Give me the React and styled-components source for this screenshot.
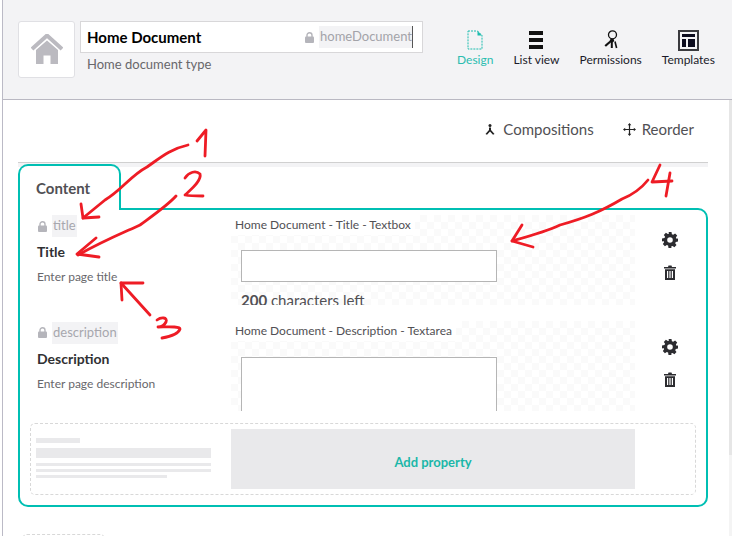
import styled, { createGlobalStyle } from "styled-components";

const TEAL = "#00bfb3";

const GlobalStyle = createGlobalStyle`
  html, body {
    margin: 0;
    width: 732px;
    height: 536px;
    overflow: hidden;
    background: #fff;
    font-family: Lato, "Open Sans", sans-serif;
  }
  * { box-sizing: border-box; }
`;

const tabs = [
  { label: "Design", active: true, icon: <DesignIcon /> },
  { label: "List view", icon: <ListIcon /> },
  { label: "Permissions", icon: <KeysIcon /> },
  { label: "Templates", icon: <TemplateIcon /> },
];

const properties = [
  {
    alias: "title",
    name: "Title",
    help: "Enter page title",
    editor: "Home Document - Title - Textbox",
    kind: "input",
    top: 17,
  },
  {
    alias: "description",
    name: "Description",
    help: "Enter page description",
    editor: "Home Document - Description - Textarea",
    kind: "textarea",
    top: 18,
    aliasHeight: 23,
  },
];

function LockIcon() {
  return (
    <svg width="9" height="11" viewBox="0 0 9 11">
      <path d="M2 5V3.2a2.5 2.5 0 0 1 5 0V5" fill="none" stroke="#b5b5bb" strokeWidth="1.4" />
      <rect x="0" y="4.6" width="9" height="6.4" rx="1" fill="#b5b5bb" />
    </svg>
  );
}

function HomeIcon() {
  return (
    <svg width="32" height="31" viewBox="0 0 32 31">
      <path d="M1 15L16 1.5 31 15" fill="none" stroke="#bbbac0" strokeWidth="4" />
      <path d="M5 16L16 6.5 27 16V30H19.5V21.5H12.5V30H5Z" fill="#bbbac0" />
    </svg>
  );
}

function DesignIcon() {
  return (
    <svg width="16" height="20" viewBox="0 0 16 20">
      <path
        d="M1 1H10.5L15 5.5V19H1Z"
        fill="none"
        stroke="#1cbcae"
        strokeWidth="1"
        strokeDasharray="2 1"
      />
      <path d="M10.5 1L15 5.5H10.5Z" fill="#1cbcae" />
    </svg>
  );
}

function ListIcon() {
  return (
    <svg width="14" height="18" viewBox="0 0 14 18">
      <rect y="0" width="14" height="4" fill="#111" />
      <rect y="7" width="14" height="4" fill="#111" />
      <rect y="14" width="14" height="4" fill="#111" />
    </svg>
  );
}

function KeysIcon() {
  return (
    <svg width="14" height="20" viewBox="0 0 14 20">
      <circle cx="8.5" cy="4.8" r="4" fill="none" stroke="#111" strokeWidth="1.3" />
      <circle cx="8" cy="10.5" r="2.1" fill="#111" />
      <path d="M7 11L1.2 16" stroke="#111" strokeWidth="2.2" />
      <path d="M7.8 12V18" stroke="#111" strokeWidth="2" />
      <path d="M11 11.5L12.6 18" stroke="#111" strokeWidth="1.6" />
    </svg>
  );
}

function TemplateIcon() {
  return (
    <svg width="21" height="21" viewBox="0 0 21 21">
      <rect x="1" y="1" width="19" height="19" fill="none" stroke="#3a3a3e" strokeWidth="2" />
      <rect x="4" y="4" width="13" height="3" fill="#0c0c1e" />
      <rect x="4" y="9" width="4" height="8" fill="#0c0c1e" />
      <rect x="10" y="9" width="7" height="8" fill="#0c0c1e" />
    </svg>
  );
}

function CompositionsIcon() {
  return (
    <svg width="10" height="11" viewBox="0 0 10 11">
      <circle cx="5" cy="1.6" r="1.5" fill="#222" />
      <path d="M4 3.5H6V6L9.5 10 8 10.8 5 7.6 2 10.8 0.5 10 4 6Z" fill="#222" />
    </svg>
  );
}

function MoveIcon() {
  return (
    <svg width="13" height="13" viewBox="0 0 13 13">
      <path d="M6.5 1v11M1 6.5h11" stroke="#222" strokeWidth="1.2" />
      <path d="M6.5 0L8.3 2.2H4.7ZM6.5 13L4.7 10.8H8.3ZM0 6.5L2.2 4.7V8.3ZM13 6.5L10.8 8.3V4.7Z" fill="#222" />
    </svg>
  );
}

function GearIcon() {
  return (
    <svg width="16" height="16" viewBox="0 0 16 16">
      <path
        fillRule="evenodd"
        fill="#2c2c30"
        d="M6.5 0h3l.4 2.2 1.3.6L13.1 1.5l2.1 2.1-1.3 1.9.6 1.3L16 6.5v3l-2.2.4-.6 1.3 1.3 1.9-2.1 2.1-1.9-1.3-1.3.6L9.5 16h-3l-.4-2.5-1.3-.6-1.9 1.3-2.1-2.1 1.3-1.9-.6-1.3L0 9.5v-3l2.5-.4.6-1.3-1.3-1.9 2.1-2.1 1.9 1.3 1.3-.6ZM8 5.2a2.8 2.8 0 1 0 0 5.6 2.8 2.8 0 0 0 0-5.6Z"
      />
    </svg>
  );
}

function TrashIcon() {
  return (
    <svg width="12" height="15" viewBox="0 0 12 15">
      <path d="M0 2H4L4.5 0.4H7.5L8 2H12V3.4H0Z" fill="#2c2c30" />
      <path
        fillRule="evenodd"
        d="M1 4.2H11V15H1ZM3 6V13H4.2V6ZM5.4 6V13H6.6V6ZM7.8 6V13H9V6Z"
        fill="#2c2c30"
      />
    </svg>
  );
}

function Annotations() {
  const line = { fill: "none", stroke: "#ee1c25", strokeWidth: 2.8, strokeLinecap: "round", strokeLinejoin: "round" };
  return (
    <Overlay viewBox="0 0 732 536">
      <g {...line}>
        <path d="M197 141L206 130 205 156" />
        <path d="M188 145C170 149 160 158 147 167 130 176 122 190 105 200L83 218" />
        <path d="M81 204L83 218 99 217" />
        <path d="M185 178C189 172 196 170 200 174 202 181 190 190 185 195 190 196 197 196 203 196" />
        <path d="M176 196C168 205 155 214 140 225 125 232 105 240 78 255" />
        <path d="M96 238L77 254 99 257" />
        <path d="M143 283L121 283 150 315" />
        <path d="M121 283L122 300" />
        <path d="M157 320C161 317 168 317 166 322 164 326 160 327 158 327 166 327 180 326 180 329 178 335 168 337 162 338" />
        <path d="M648 180C640 190 632 195 622 199 600 212 585 218 560 225 545 232 530 236 512 241" />
        <path d="M522 225L512 241 533 247" />
        <path d="M660 165L652 182 672 181" />
        <path d="M670 173L666 196" />
      </g>
    </Overlay>
  );
}

export default function App() {
  return (
    <Shell>
      <GlobalStyle />
      <Header>
        <LogoBox>
          <HomeIcon />
        </LogoBox>
        <NameColumn>
          <NameField>
            <NameText>Home Document</NameText>
            <AliasLock>
              <LockIcon />
              <HeaderAlias>homeDocument</HeaderAlias>
            </AliasLock>
          </NameField>
          <NameHelp>Home document type</NameHelp>
        </NameColumn>
        <Tabs>
          {tabs.map((tab) => (
            <Tab key={tab.label} $active={tab.active}>
              <TabIcon>{tab.icon}</TabIcon>
              {tab.label}
            </Tab>
          ))}
        </Tabs>
      </Header>

      <Main>
        <Board>
          <Toolbar>
            <ToolButton $gap={8}>
              <CompositionsIcon />
              Compositions
            </ToolButton>
            <ToolButton $gap={6}>
              <MoveIcon />
              Reorder
            </ToolButton>
          </Toolbar>
          <Divider />
          <GroupTab>Content</GroupTab>
          <Group>
            {properties.map((prop) => (
              <Row key={prop.alias}>
                <Meta>
                  <AliasRow $h={prop.aliasHeight}>
                    <LockIcon />
                    <Alias>{prop.alias}</Alias>
                  </AliasRow>
                  <PropName>{prop.name}</PropName>
                  <PropHelp>{prop.help}</PropHelp>
                </Meta>
                <Preview>
                  <EditorName>{prop.editor}</EditorName>
                  {prop.kind === "input" ? (
                    <>
                      <FakeInput />
                      <CharsLeft>
                        <b>200</b> characters left
                      </CharsLeft>
                    </>
                  ) : (
                    <FakeTextarea />
                  )}
                </Preview>
                <Actions $top={prop.top}>
                  <GearIcon />
                  <TrashIcon />
                </Actions>
              </Row>
            ))}
            <AddBox>
              <Skeleton>
                <SkeletonBar $w={44} $h={5} />
                <SkeletonBar $w={175} $h={10} $mt={5} />
                <SkeletonBar $w={175} $h={3} $mt={5} />
                <SkeletonBar $w={175} $h={3} $mt={3} />
                <SkeletonBar $w={131} $h={3} $mt={3} />
              </Skeleton>
              <AddButton>Add property</AddButton>
            </AddBox>
          </Group>
          <AddGroup />
        </Board>
        <Scrollbar>
          <ScrollThumb />
        </Scrollbar>
      </Main>
      <Annotations />
    </Shell>
  );
}

const Shell = styled.div`
  position: relative;
  width: 730px;
  height: 536px;
  margin-left: 2px;
  border-left: 1px solid #bbbac6;
  display: flex;
  flex-direction: column;
  overflow: hidden;
`;

const Overlay = styled.svg`
  position: absolute;
  left: -3px;
  top: 0;
  width: 732px;
  height: 536px;
  pointer-events: none;
  z-index: 5;
`;

const Header = styled.header`
  flex: none;
  height: 100px;
  display: flex;
  align-items: flex-start;
  padding: 21px 0 0 15px;
  background: #f3f3f5;
  border-bottom: 1px solid #b9b8c2;
`;

const LogoBox = styled.div`
  width: 57px;
  height: 57px;
  display: flex;
  align-items: center;
  justify-content: center;
  background: #fff;
  border: 1px solid #e0e0e4;
  border-radius: 3px;
`;

const NameColumn = styled.div`
  width: 343px;
  margin-left: 5px;
`;

const NameField = styled.div`
  height: 32px;
  display: flex;
  align-items: center;
  justify-content: space-between;
  padding: 0 9px 0 6px;
  background: #fff;
  border: 1px solid #d8d7d9;
`;

const NameText = styled.span`
  font-size: 15px;
  font-weight: 700;
  color: #000;
`;

const AliasLock = styled.span`
  display: flex;
  align-items: center;
  gap: 5px;
`;

const HeaderAlias = styled.span`
  height: 22px;
  line-height: 21px;
  padding-left: 1px;
  background: #f3f3f5;
  color: #a3a3a9;
  font-size: 13px;
  border-right: 1px solid #555;
`;

const NameHelp = styled.div`
  margin: 2px 0 0 7px;
  font-size: 13px;
  line-height: 18px;
  color: #68676b;
`;

const Tabs = styled.nav`
  display: flex;
  margin-left: 24px;
`;

const Tab = styled.div`
  display: flex;
  flex-direction: column;
  align-items: center;
  padding: 8px 10px 0;
  font-size: 12px;
  line-height: 16px;
  white-space: nowrap;
  color: ${(p) => (p.$active ? "#2bbdb0" : "#1b1b2a")};
`;

const TabIcon = styled.span`
  height: 22px;
  margin-bottom: 1px;
  display: flex;
  align-items: center;
`;

const Main = styled.main`
  flex: 1;
  min-height: 0;
  display: flex;
  background: #fff;
`;

const Board = styled.div`
  width: 705px;
  margin-left: 15px;
  flex: none;
`;

const Toolbar = styled.div`
  height: 62px;
  width: 690px;
  display: flex;
  justify-content: flex-end;
  align-items: flex-start;
  gap: 29px;
  padding: 20px 14px 0 0;
`;

const ToolButton = styled.div`
  display: flex;
  align-items: center;
  gap: ${(p) => p.$gap}px;
  font-size: 15px;
  line-height: 18px;
  color: #515054;
`;

const Divider = styled.div`
  width: 690px;
  height: 5px;
  background: #f3f3f5;
  border-top: 1px solid #d0d0d0;
`;

const GroupTab = styled.div`
  position: relative;
  z-index: 1;
  width: 103px;
  height: 46px;
  margin-top: -3px;
  margin-bottom: -2px;
  padding: 12px 0 0 16px;
  background: #fff;
  border: 2px solid ${TEAL};
  border-bottom: none;
  border-radius: 10px 10px 0 0;
  font-size: 15px;
  line-height: 20px;
  font-weight: 700;
  color: #515054;
`;

const Group = styled.section`
  width: 690px;
  height: 299px;
  padding-top: 5px;
  border: 2px solid ${TEAL};
  border-radius: 0 10px 10px 10px;
`;

const Row = styled.div`
  display: grid;
  grid-template-columns: 211px 404px 70px;
  height: 90px;
  margin-bottom: 16px;
`;

const Meta = styled.div`
  padding-left: 17px;
`;

const AliasRow = styled.div`
  display: flex;
  align-items: center;
  gap: 5px;
  height: ${(p) => p.$h || 22}px;
  padding-left: 1px;
`;

const Alias = styled.span`
  padding: 0 1px 2px;
  background: #f3f3f5;
  color: #a7a7ae;
  font-size: 13px;
  line-height: 20px;
`;

const PropName = styled.div`
  margin-top: 6px;
  font-size: 14px;
  font-weight: 700;
  line-height: 18px;
  color: #303033;
`;

const PropHelp = styled.div`
  margin-top: 8px;
  font-size: 12px;
  line-height: 16px;
  color: #68676b;
`;

const Preview = styled.div`
  height: 90px;
  overflow: hidden;
  background: repeating-conic-gradient(#fafafa 0 25%, #fff 0 50%) 0 0 / 14px 14px;
`;

const EditorName = styled.div`
  width: fit-content;
  height: 20px;
  padding: 2px 4px;
  background: #fff;
  font-size: 12px;
  line-height: 16px;
  color: #515054;
`;

const FakeInput = styled.div`
  width: 256px;
  height: 32px;
  margin: 15px 0 0 10px;
  background: #fff;
  border: 1px solid #b5b5b5;
`;

const FakeTextarea = styled.div`
  width: 256px;
  height: 90px;
  margin: 16px 0 0 10px;
  background: #fff;
  border: 1px solid #b5b5b5;
`;

const CharsLeft = styled.div`
  margin: 9px 0 0 10px;
  font-size: 15px;
  line-height: 18px;
  color: #515054;

  b {
    font-weight: 700;
  }
`;

const Actions = styled.div`
  display: flex;
  flex-direction: column;
  align-items: center;
  gap: 17px;
  padding-top: ${(p) => p.$top}px;
`;

const AddBox = styled.div`
  width: 666px;
  height: 72px;
  margin: -4px 0 0 10px;
  display: flex;
  padding: 5px;
  border: 1px dashed #d8d8d8;
  border-radius: 5px;
`;

const Skeleton = styled.div`
  width: 195px;
  flex: none;
  padding-top: 9px;
`;

const SkeletonBar = styled.div`
  width: ${(p) => p.$w}px;
  height: ${(p) => p.$h}px;
  margin-top: ${(p) => p.$mt || 0}px;
  background: #e9e9eb;
`;

const AddButton = styled.div`
  width: 404px;
  height: 60px;
  display: flex;
  align-items: center;
  justify-content: center;
  padding-top: 6px;
  background: #e9e9eb;
  color: #1bb7a8;
  font-size: 13px;
  font-weight: 700;
`;

const AddGroup = styled.div`
  width: 83px;
  height: 40px;
  margin: 27px 0 0 4px;
  border: 1px dashed #d8d8d8;
  border-radius: 5px;
`;

const Scrollbar = styled.div`
  width: 4px;
  flex: none;
  margin-left: 6px;
  background: #f4f4f4;
`;

const ScrollThumb = styled.div`
  height: 355px;
  background: #e6e6e6;
`;
